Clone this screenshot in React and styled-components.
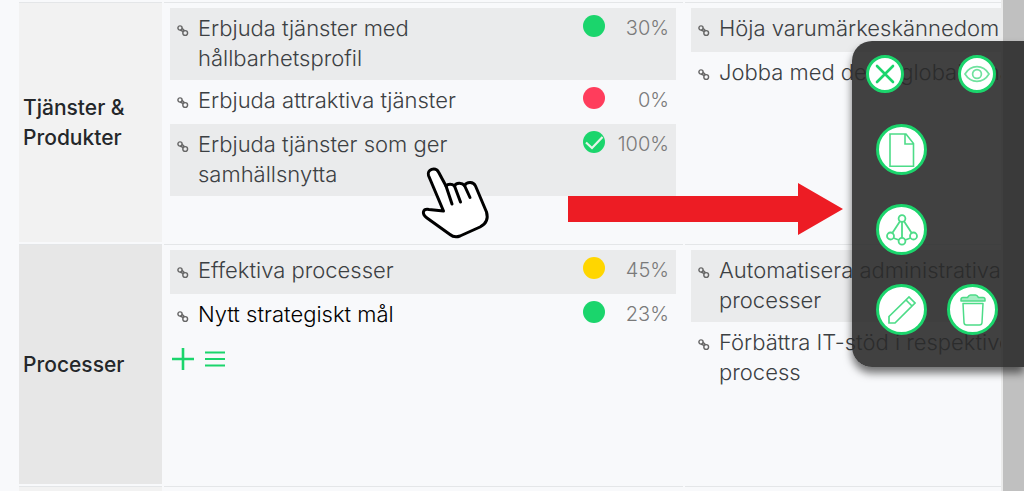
import styled, { createGlobalStyle, css } from "styled-components";

const colors = {
    page: "#f8f9fb",
    stripe: "#eaebec",
    line: "#e4e6e8",
    text: "#3c4043",
    muted: "#7a7a7a",
    green: "#1bd56c",
    red: "#ff3d5c",
    yellow: "#ffd600",
};

const GlobalStyle = createGlobalStyle`
    *, *::before, *::after {
        box-sizing: border-box;
    }
    body {
        margin: 0;
        background: ${colors.page};
        color: ${colors.text};
        font-family: Inter, "Open Sans", sans-serif;
        font-size: 22px;
        font-weight: 300;
        line-height: 30px;
    }
`;

const Page = styled.div`
    position: relative;
    display: flex;
    height: 100vh;
    overflow: hidden;
`;

const Board = styled.main`
    flex: 1;
    min-width: 0;
    overflow: hidden;
    padding-left: 17px;
`;

const Gutter = styled.div`
    width: 23px;
    flex-shrink: 0;
    border-left: 2px solid #ebebeb;
    background: #c0c0c0;
`;

const Table = styled.table`
    width: 1189px;
    table-layout: fixed;
    border-collapse: separate;
    border-spacing: 2px;
`;

const LabelCol = styled.col`
    width: 143px;
`;

const Row = styled.tr`
    height: 240px;
`;

const RowLabel = styled.th`
    padding: 0 4px;
    border-top: 1px solid ${colors.line};
    background: ${({ $dark }) => ($dark ? "#e7e7e7" : "#f2f2f2")};
    color: #24272a;
    font-size: 21px;
    font-weight: 500;
    text-align: left;
    vertical-align: middle;
`;

const Cell = styled.td`
    padding: 5px 7px 5px 6px;
    border-top: 1px solid ${colors.line};
    vertical-align: top;
`;

const GoalList = styled.ul`
    margin: 0;
    padding: 0;
    list-style: none;
`;

const Goal = styled.li`
    display: flex;
    align-items: flex-start;
    min-height: 44px;
    padding: 5px 7px 7px;

    &:nth-child(odd) {
        background: ${colors.stripe};
    }
`;

const LinkMark = styled.svg`
    width: 12px;
    height: 12px;
    margin: 12px 9px 0 0;
    flex-shrink: 0;
`;

const GoalName = styled.span`
    flex: 0 1 340px;
    color: ${({ $active }) => ($active ? "#000" : "inherit")};
`;

const Dot = styled.svg`
    width: 22px;
    height: 22px;
    margin: 2px 0 0 auto;
    flex-shrink: 0;
`;

const Percent = styled.span`
    width: 64px;
    color: ${colors.muted};
    font-size: 20px;
    text-align: right;
`;

const CellActions = styled.div`
    display: flex;
    gap: 10px;
    padding: 10px 2px;
`;

const IconButton = styled.button`
    display: flex;
    padding: 0;
    border: 0;
    background: none;
    color: ${colors.green};
    cursor: pointer;
`;

const Panel = styled.aside`
    position: absolute;
    top: 41px;
    right: 0;
    width: 172px;
    padding: 14px 0 32px 14px;
    border-radius: 20px 0 0 20px;
    background: rgba(42, 42, 42, 0.89);
    box-shadow: 0 6px 8px rgba(0, 0, 0, 0.55);
`;

const PanelHead = styled.div`
    display: flex;
    justify-content: space-between;
    padding-right: 28px;
    margin-bottom: 31px;
`;

const PanelTools = styled.div`
    display: grid;
    grid-template-columns: 51px 51px;
    gap: 29px 20px;
    padding-left: 10px;
`;

const small = css`
    width: 38px;
    height: 38px;
`;

const large = css`
    width: 51px;
    height: 51px;
`;

const RoundButton = styled.button`
    ${({ $small }) => ($small ? small : large)}
    display: flex;
    align-items: center;
    justify-content: center;
    grid-column: ${({ $column }) => $column || "auto"};
    padding: 0;
    border: 3px solid ${colors.green};
    border-radius: 50%;
    background: #fff;
    color: ${colors.green};
    cursor: pointer;

    svg {
        flex-shrink: 0;
    }
`;

const Arrow = styled.svg`
    position: absolute;
    top: 183px;
    right: 181px;
    width: 275px;
    height: 52px;
`;

const Hand = styled.svg`
    position: absolute;
    top: 160px;
    left: 410px;
    width: 90px;
    height: 85px;
`;

const statusColors = {
    good: colors.green,
    done: colors.green,
    warn: colors.yellow,
    bad: colors.red,
};

const rows = [
    {
        label: "Tjänster & Produkter",
        goals: [
            { name: "Erbjuda tjänster med hållbarhetsprofil", status: "good", percent: 30 },
            { name: "Erbjuda attraktiva tjänster", status: "bad", percent: 0 },
            { name: "Erbjuda tjänster som ger samhällsnytta", status: "done", percent: 100 },
        ],
        activities: [
            { name: "Höja varumärkeskännedom" },
            { name: "Jobba med de 17 globala målen" },
        ],
    },
    {
        label: "Processer",
        dark: true,
        editable: true,
        goals: [
            { name: "Effektiva processer", status: "warn", percent: 45 },
            { name: "Nytt strategiskt mål", status: "good", percent: 23, active: true },
        ],
        activities: [
            { name: "Automatisera administrativa processer" },
            { name: "Förbättra IT-stöd i respektive process" },
        ],
    },
    { label: "", goals: [], activities: [] },
];

function StatusDot({ status }) {
    return (
        <Dot viewBox="0 0 22 22" aria-hidden="true">
            <circle cx="11" cy="11" r="11" fill={statusColors[status]} />
            {status === "done" && (
                <path d="M3 11.5l6 5.500L19.500 6" fill="none" stroke="#e8f3ea" strokeWidth="2.2" />
            )}
        </Dot>
    );
}

function GoalItem({ name, status, percent, active }) {
    return (
        <Goal>
            <LinkMark viewBox="0 0 12 12" fill="none" stroke="#666" strokeWidth="1.4" aria-hidden="true">
                <circle cx="3" cy="3" r="2.1" />
                <circle cx="8.2" cy="8" r="2.4" />
                <path d="M3 5.200l3.400 1.300M5 3.200l2.600 2.500" />
            </LinkMark>
            <GoalName $active={active}>{name}</GoalName>
            {status && <StatusDot status={status} />}
            {status && <Percent>{percent}%</Percent>}
        </Goal>
    );
}

function SidePanel() {
    return (
        <Panel>
            <PanelHead>
                <RoundButton $small aria-label="Stäng">
                    <svg width="20" height="20" viewBox="0 0 20 20" fill="none" stroke="currentColor" strokeWidth="2.6" strokeLinecap="round">
                        <path d="M2 2l16 16M18 2L2 18" />
                    </svg>
                </RoundButton>
                <RoundButton $small aria-label="Visa">
                    <svg width="26" height="18" viewBox="0 0 26 18" fill="none" stroke="#6fe29e" strokeWidth="1.7">
                        <path d="M1 9C7-.8 19-.8 25 9 19 18.8 7 18.8 1 9z" />
                        <circle cx="13" cy="9" r="4.4" />
                    </svg>
                </RoundButton>
            </PanelHead>
            <PanelTools>
                <RoundButton $column="1" aria-label="Dokument">
                    <svg width="26" height="34" viewBox="0 0 26 34" fill="none" stroke="#4ddc88" strokeWidth="1.6">
                        <path d="M1 1h16l7.500 9.500V33.200H1zM16 1v10h8.500" />
                    </svg>
                </RoundButton>
                <RoundButton $column="1" aria-label="Struktur">
                    <svg width="32" height="32" viewBox="0 0 32 32" fill="none" stroke="#4ddc88" strokeWidth="1.8">
                        <path d="M16 8v16M14 7.300L6.500 18.800M18 7.300L25.500 18.800M7.500 24l5.300 2M24.500 24l-5.300 2" />
                        <circle cx="16" cy="4.500" r="3.400" />
                        <circle cx="4.500" cy="22" r="3.500" />
                        <circle cx="27.500" cy="22" r="3.500" />
                        <circle cx="16" cy="27.300" r="3.400" />
                    </svg>
                </RoundButton>
                <RoundButton $column="1" aria-label="Redigera">
                    <svg width="28" height="28" viewBox="0 0 28 28" fill="none" stroke="#4ddc88" strokeWidth="1.7">
                        <path d="M1 27v-6.500L21 1l6 6L7 27zM18 4l6 6" />
                    </svg>
                </RoundButton>
                <RoundButton $column="2" aria-label="Ta bort">
                    <svg width="26" height="32" viewBox="0 0 26 32" fill="none" stroke="#4ddc88" strokeWidth="1.500" strokeLinejoin="round">
                        <path d="M1 7V5.500q0-2 2-2h4.500Q9 1 10.500 1h5q1.500 0 3 2.500H23q2 0 2 2V7z" fill="#a5edc4" />
                        <path d="M3 9.500h20L22 28.500q-.2 2.500-2.500 2.500h-13q-2.300 0-2.500-2.500z" />
                    </svg>
                </RoundButton>
            </PanelTools>
        </Panel>
    );
}

export default function App() {
    return (
        <Page>
            <GlobalStyle />
            <Board>
                <Table>
                    <colgroup>
                        <LabelCol />
                        <col />
                        <col />
                    </colgroup>
                    <tbody>
                        {rows.map((row, index) => (
                            <Row key={index}>
                                <RowLabel scope="row" $dark={row.dark}>{row.label}</RowLabel>
                                <Cell>
                                    <GoalList>
                                        {row.goals.map((goal) => <GoalItem key={goal.name} {...goal} />)}
                                    </GoalList>
                                    {row.editable && (
                                        <CellActions>
                                            <IconButton aria-label="Lägg till">
                                                <svg width="22" height="22" viewBox="0 0 22 22" stroke="currentColor" strokeWidth="2.6">
                                                    <path d="M11 0v22M0 11h22" />
                                                </svg>
                                            </IconButton>
                                            <IconButton aria-label="Lista">
                                                <svg width="22" height="22" viewBox="0 0 22 22" stroke="currentColor" strokeWidth="2.2">
                                                    <path d="M1 4.500h20M1 11h20M1 17.500h20" />
                                                </svg>
                                            </IconButton>
                                        </CellActions>
                                    )}
                                </Cell>
                                <Cell>
                                    <GoalList>
                                        {row.activities.map((item) => <GoalItem key={item.name} {...item} />)}
                                    </GoalList>
                                </Cell>
                            </Row>
                        ))}
                    </tbody>
                </Table>
            </Board>
            <Gutter />
            <Arrow viewBox="0 0 275 52" aria-hidden="true">
                <path d="M0 13h230V0l45 26-45 26V39H0z" fill="#ed1c24" />
            </Arrow>
            <SidePanel />
            <Hand viewBox="0 0 90 85" fill="#fff" stroke="#000" strokeWidth="3" strokeLinejoin="round" strokeLinecap="round" aria-hidden="true">
                <path d="M33.500 51L18.500 15.500C16.500 10 25.500 6 28.500 12L36 26C38 23.500 42 23.500 44.500 26 46 22.500 52 22.500 54.500 25.500 57 21.500 63.500 21.500 65.500 26L76.500 52C78.500 59 76 64 70 67L50 76C46 77.500 43 77 40 74.500L17 58C11 53.500 13 48.500 19 49.500z" />
                <path d="M36 26l6 18M44.500 26l6 16M54.500 25.500l5.500 12" fill="none" />
            </Hand>
        </Page>
    );
}
